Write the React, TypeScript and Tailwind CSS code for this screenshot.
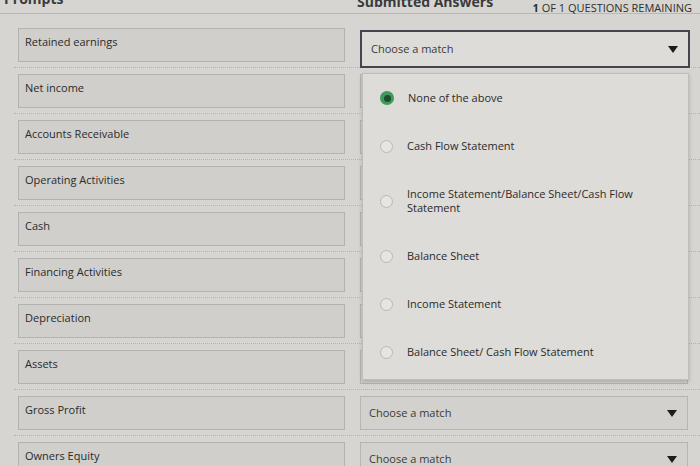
import type { ReactElement } from 'react';

const prompts = [
  'Retained earnings',
  'Net income',
  'Accounts Receivable',
  'Operating Activities',
  'Cash',
  'Financing Activities',
  'Depreciation',
  'Assets',
  'Gross Profit',
  'Owners Equity',
];

const options = [
  { label: 'None of the above', selected: true },
  { label: 'Cash Flow Statement' },
  { label: 'Income Statement/Balance Sheet/Cash Flow Statement' },
  { label: 'Balance Sheet' },
  { label: 'Income Statement' },
  { label: 'Balance Sheet/ Cash Flow Statement' },
];

function Caret(): ReactElement {
  return (
    <svg width="10" height="7" viewBox="0 0 10 7" className="shrink-0">
      <polygon points="0,0 10,0 5,7" fill="#1c1c1c" />
    </svg>
  );
}

function Select({ focused }: { focused?: boolean }): ReactElement {
  if (focused) {
    return (
      <div className="-mb-[6px] ml-[15px] mt-[2px] flex h-[38px] w-[330px] items-center justify-between border-2 border-[#4a4152] bg-[#dddcd8] pl-[9px] pr-[10px] text-[11px] text-[#3a3a3a]">
        <span>Choose a match</span>
        <Caret />
      </div>
    );
  }
  return (
    <div className="ml-[15px] flex h-[34px] w-[328px] items-center justify-between border border-[#b6b5b1] bg-[#d2d1cd] pl-[8px] pr-[10px] text-[11px] text-[#3a3a3a]">
      <span>Choose a match</span>
      <Caret />
    </div>
  );
}

export default function App(): ReactElement {
  return (
    <div className="relative h-[466px] w-[700px] overflow-hidden bg-[#d6d5d1] font-['Open_Sans',sans-serif] text-[#2b2b2b]">
      {/* header, cut at the top edge */}
      <div className="-mt-[10px] flex h-[24px] items-end border-b border-[#b9b8b4]">
        <div className="w-[357px] pl-[4px]">
          <span className="mb-[6px] block text-[14px] font-bold leading-[16px] text-[#3b3b3b]">Prompts</span>
        </div>
        <div className="flex h-full flex-1 items-end justify-between pr-[8px]">
          <span className="mb-[3px] block text-[14px] font-bold leading-[16px] text-[#3b3b3b]">
            Submitted Answers
          </span>
          <span className="mt-[11px] self-start text-[11px] leading-[14px] text-[#2f2f2f]">
            <b className="font-bold">1</b> OF 1 QUESTIONS REMAINING
          </span>
        </div>
      </div>

      {/* prompt rows */}
      <div className="ml-[14px] pt-[8px]">
        {prompts.map((p, i) => (
          <div key={p} className="flex border-b border-dotted border-[#b3b2ae] pb-[5px] pt-[6px]">
            <div className="ml-[4px] flex h-[34px] w-[327px] items-start border border-[#b3b2ae] bg-[#d0cfcb] px-[6px] pt-[5px] text-[11px] leading-[16px]">
              {p}
            </div>
            <Select focused={i === 0} />
          </div>
        ))}
      </div>

      {/* open dropdown */}
      <div className="absolute left-[362px] top-[73px] w-[327px] border border-[#bfbeba] bg-[#dddcd8] pb-[3px] shadow-[0_2px_4px_rgba(0,0,0,0.18)]">
        {options.map((o) => (
          <div key={o.label} className="flex items-center py-[17px] pl-[17px] pr-[50px]">
            {o.selected ? (
              <span className="flex h-[14px] w-[14px] shrink-0 items-center justify-center rounded-full bg-[#3f9a5c]">
                <span className="h-[7px] w-[7px] rounded-full bg-[#1f4d2c]" />
              </span>
            ) : (
              <span className="h-[13px] w-[13px] shrink-0 rounded-full border border-[#b9b8b4] bg-[#e6e5e1]" />
            )}
            <span className="ml-[14px] text-[11px] leading-[14px] text-[#2b2b2b]">{o.label}</span>
          </div>
        ))}
      </div>
    </div>
  );
}
